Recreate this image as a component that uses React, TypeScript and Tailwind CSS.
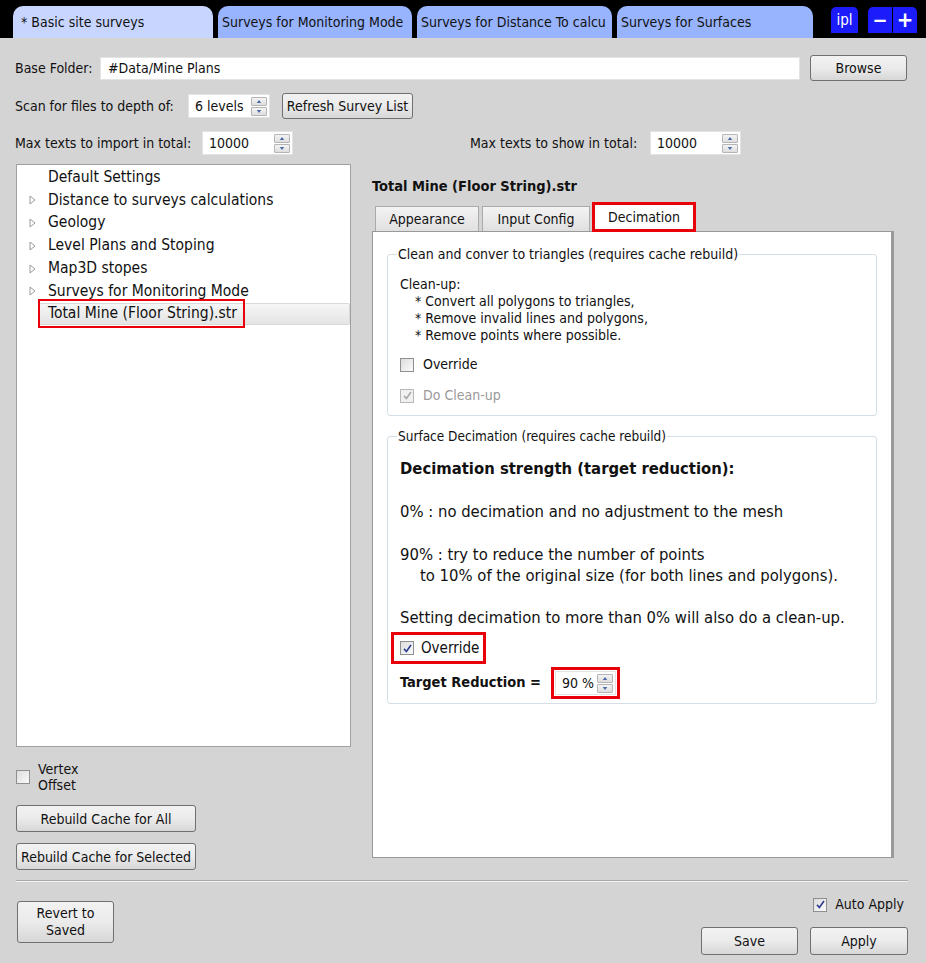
import React from "react";

const FONT = "font-['DejaVu_Sans_Condensed','Liberation_Sans',sans-serif]";

function Check({ checked = false, disabled = false }: { checked?: boolean; disabled?: boolean }) {
  return (
    <span
      className={`inline-flex h-[14px] w-[14px] shrink-0 items-center justify-center border ${
        disabled ? "border-[#b8b8b8] bg-[#f0f0f0]" : "border-[#8e8f8f] bg-gradient-to-br from-[#dcdcdc] to-[#fbfbfb]"
      }`}
    >
      {checked && (
        <svg viewBox="0 0 12 12" className="h-[11px] w-[11px]">
          <path
            d="M2.2 6.4 L4.8 9.2 L9.8 2.2"
            fill="none"
            stroke={disabled ? "#a8a8a8" : "#2b3a8f"}
            strokeWidth="1.7"
          />
        </svg>
      )}
    </span>
  );
}

function Button({ children, className = "" }: { children: React.ReactNode; className?: string }) {
  return (
    <div
      className={`flex items-center justify-center rounded-[3px] border border-[#707070] bg-gradient-to-b from-[#f2f2f2] via-[#ebebeb] to-[#d7d7d7] leading-[16px] text-[#111] ${className}`}
    >
      {children}
    </div>
  );
}

function Spin({ value, className = "" }: { value: string; className?: string }) {
  return (
    <div className={`flex items-center border border-[#e3e3e3] bg-white ${className}`}>
      <span className="flex-1 pl-[6px] text-[14px] text-[#111]">{value}</span>
      <div className="mr-[2px] flex w-[16px] flex-col gap-[1px]">
        {[0, 1].map((i) => (
          <div
            key={i}
            className="flex h-[9px] items-center justify-center rounded-[1px] border border-[#b5b5b5] bg-gradient-to-b from-[#f4f4f4] to-[#dedede]"
          >
            <svg viewBox="0 0 6 4" className="h-[3px] w-[6px]">
              <path d={i === 0 ? "M0 4 L3 0 L6 4 Z" : "M0 0 L3 4 L6 0 Z"} fill="#4b6aa8" />
            </svg>
          </div>
        ))}
      </div>
    </div>
  );
}

function TreeArrow() {
  return (
    <svg viewBox="0 0 8 10" className="h-[10px] w-[8px]">
      <path d="M1 1 L6 5 L1 9 Z" fill="white" stroke="#9a9a9a" strokeWidth="1" />
    </svg>
  );
}

function Group({
  title,
  children,
  className = "",
  titleSize = "text-[14px]",
}: {
  title: string;
  children: React.ReactNode;
  className?: string;
  titleSize?: string;
}) {
  return (
    <div className={`relative rounded-[3px] border border-[#d5dfe5] ${className}`}>
      <span className={`absolute left-[9px] top-[-10px] bg-white px-[1px] leading-[18px] text-[#111] ${titleSize}`}>
        {title}
      </span>
      {children}
    </div>
  );
}

const tabs = [
  { label: "* Basic site surveys", w: "w-[200px]", active: true },
  { label: "Surveys for Monitoring Mode", w: "w-[194px]" },
  { label: "Surveys for Distance To calcu", w: "w-[195px]" },
  { label: "Surveys for Surfaces", w: "w-[196px]" },
];

const treeItems = [
  { label: "Default Settings", arrow: false },
  { label: "Distance to surveys calculations", arrow: true },
  { label: "Geology", arrow: true },
  { label: "Level Plans and Stoping", arrow: true },
  { label: "Map3D stopes", arrow: true },
  { label: "Surveys for Monitoring Mode", arrow: true },
];

export default function App() {
  return (
    <div className={`flex h-[963px] w-[926px] flex-col overflow-hidden bg-[#d4d4d4] text-[#111] ${FONT}`}>
      {/* document tabs */}
      <div className="flex h-[38px] items-end bg-black pl-[13px]">
        <div className="flex gap-[5px]">
          {tabs.map((t) => (
            <div
              key={t.label}
              className={`flex h-[32px] items-center overflow-hidden whitespace-nowrap rounded-t-[10px] ${t.w} ${
                t.active ? "bg-[#c8d6ff] pl-[8px]" : "bg-[#98b4fe] pl-[4px]"
              } text-[14px] text-[#111]`}
            >
              {t.label}
            </div>
          ))}
        </div>
        <div className="mb-[5px] ml-[18px] flex h-[26px] w-[27px] items-center justify-center rounded-t-[5px] bg-[#1b1bfb] text-[15px] text-white">
          ipl
        </div>
        <div className="mb-[5px] ml-[10px] flex h-[26px] gap-[1px]">
          <div className="flex w-[24px] items-center justify-center rounded-tl-[5px] bg-[#1b1bfb] text-[20px] font-bold leading-none text-white">
            −
          </div>
          <div className="flex w-[24px] items-center justify-center rounded-tr-[5px] bg-[#1b1bfb] text-[22px] font-bold leading-none text-white">
            +
          </div>
        </div>
      </div>

      <div className="flex flex-1 flex-col px-[15px] text-[14px]">
        {/* base folder */}
        <div className="mt-[17px] flex h-[26px] items-center">
          <span className="w-[85px]">Base Folder:</span>
          <div className="flex h-[23px] flex-1 items-center border border-[#e3e3e3] bg-white pl-[7px]">#Data/Mine Plans</div>
          <Button className="ml-[10px] h-[26px] w-[97px]">Browse</Button>
          <span className="w-[4px]" />
        </div>

        <div className="mt-[12px] flex h-[26px] items-center">
          <span className="w-[173px]">Scan for files to depth of:</span>
          <Spin value="6 levels" className="h-[24px] w-[82px]" />
          <Button className="ml-[12px] h-[26px] w-[131px]">Refresh Survey List</Button>
        </div>

        <div className="mt-[12px] flex h-[24px] items-center">
          <span className="w-[187px]">Max texts to import in total:</span>
          <Spin value="10000" className="h-[24px] w-[91px]" />
          <span className="ml-[177px] w-[180px]">Max texts to show in total:</span>
          <Spin value="10000" className="h-[24px] w-[91px]" />
        </div>

        {/* main body */}
        <div className="mt-[9px] flex">
          <div className="flex w-[336px] flex-col pl-[1px]">
            <div className="flex h-[583px] flex-col border border-[#a0a0a0] bg-white pt-[1px] text-[15.5px]">
              {treeItems.map((it) => (
                <div key={it.label} className="flex h-[22.8px] items-center">
                  <span className="flex w-[31px] justify-end pr-[11px]">{it.arrow && <TreeArrow />}</span>
                  {it.label}
                </div>
              ))}
              <div className="ml-[21px] flex h-[22px] items-center rounded-[2px] border border-[#d9d9d9] bg-gradient-to-b from-[#f6f6f6] to-[#e4e4e4] pl-[9px]">
                <span className="-ml-[10px] border-2 border-[#e8000b] py-[1px] pl-[8px] pr-[6px]">
                  Total Mine (Floor String).str
                </span>
              </div>
            </div>

            <div className="mt-[14px] flex items-start gap-[8px]">
              <span className="mt-[8px]">
                <Check />
              </span>
              <span className="leading-[16px]">
                Vertex
                <br />
                Offset
              </span>
            </div>
            <Button className="mt-[12px] h-[27px] w-[180px]">Rebuild Cache for All</Button>
            <Button className="mt-[11px] h-[27px] w-[180px]">Rebuild Cache for Selected</Button>
          </div>

          <div className="ml-[21px] flex w-[522px] flex-col">
            <div className="mt-[13px] text-[14.5px] font-bold leading-[18px]">Total Mine (Floor String).str</div>
            <div className="mt-[6px] flex h-[30px] items-end pl-[3px]">
              <div className="flex h-[25px] w-[104px] items-center justify-center border border-b-0 border-[#aaa] bg-gradient-to-b from-[#f3f3f3] to-[#e0e0e0]">
                Appearance
              </div>
              <div className="ml-[3px] flex h-[25px] w-[108px] items-center justify-center border border-b-0 border-[#aaa] bg-gradient-to-b from-[#f3f3f3] to-[#e0e0e0]">
                Input Config
              </div>
              <div className="z-10 -mb-[1px] ml-[2px] flex h-[30px] w-[104px] items-center justify-center border-[3px] border-[#e8000b] bg-white">
                Decimation
              </div>
            </div>
            <div className="flex h-[627px] flex-col border border-[#999] border-r-[3px] bg-white px-[14px] pt-[22px]">
              <Group title="Clean and conver to triangles (requires cache rebuild)" className="h-[162px] px-[12px] pt-[21px]">
                <div className="leading-[17px]">
                  <div>Clean-up:</div>
                  <div className="pl-[15px]">* Convert all polygons to triangles,</div>
                  <div className="pl-[15px]">* Remove invalid lines and polygons,</div>
                  <div className="pl-[15px]">* Remove points where possible.</div>
                </div>
                <div className="mt-[10px] flex items-center gap-[9px]">
                  <Check />
                  Override
                </div>
                <div className="mt-[10px] flex items-center gap-[9px] text-[#9a9a9a]">
                  <Check checked disabled />
                  Do Clean-up
                </div>
              </Group>

              <Group
                title="Surface Decimation (requires cache rebuild)"
                titleSize="text-[13.5px]"
                className="mt-[20px] h-[268px] px-[12px] pt-[22px]"
              >
                <div className="text-[16.5px] font-bold leading-[20px]">Decimation strength (target reduction):</div>
                <div className="mt-[23px] text-[16.5px] leading-[20px]">0% : no decimation and no adjustment to the mesh</div>
                <div className="mt-[22px] text-[16.5px] leading-[21px]">
                  <div>90% : try to reduce the number of points</div>
                  <div className="pl-[20px]">to 10% of the original size (for both lines and polygons).</div>
                </div>
                <div className="mt-[22px] text-[16.5px] leading-[20px]">
                  Setting decimation to more than 0% will also do a clean-up.
                </div>
                <div className="-ml-[9px] mt-[4px] flex h-[32px] w-[95px] items-center gap-[7px] border-[3px] border-[#e8000b] pl-[6px] text-[15px]">
                  <Check checked />
                  Override
                </div>
                <div className="mt-[3px] flex items-center">
                  <span className="text-[14.5px] font-bold">Target Reduction =</span>
                  <div className="ml-[10px] flex h-[32px] w-[69px] items-center border-[3px] border-[#e8000b] p-[1px]">
                    <Spin value="90 %" className="h-full w-full" />
                  </div>
                </div>
              </Group>
            </div>
          </div>
        </div>

        {/* footer */}
        <div className="ml-[1px] mt-[10px] h-[2px] w-[892px] border-t border-[#a9a9a9] bg-[#f4f4f4]" />
        <div className="mt-[12px] flex">
          <div className="flex flex-col">
            <Button className="ml-[2px] mt-[7px] h-[42px] w-[97px] leading-[17px]">
              <span className="text-center">
                Revert to
                <br />
                Saved
              </span>
            </Button>
          </div>
          <div className="ml-auto mr-[3px] flex flex-col items-end">
            <div className="mr-[4px] flex items-center gap-[8px]">
              <Check checked />
              Auto Apply
            </div>
            <div className="mt-[12px] flex gap-[12px]">
              <Button className="h-[28px] w-[97px]">Save</Button>
              <Button className="h-[28px] w-[98px]">Apply</Button>
            </div>
          </div>
        </div>
      </div>
    </div>
  );
}
